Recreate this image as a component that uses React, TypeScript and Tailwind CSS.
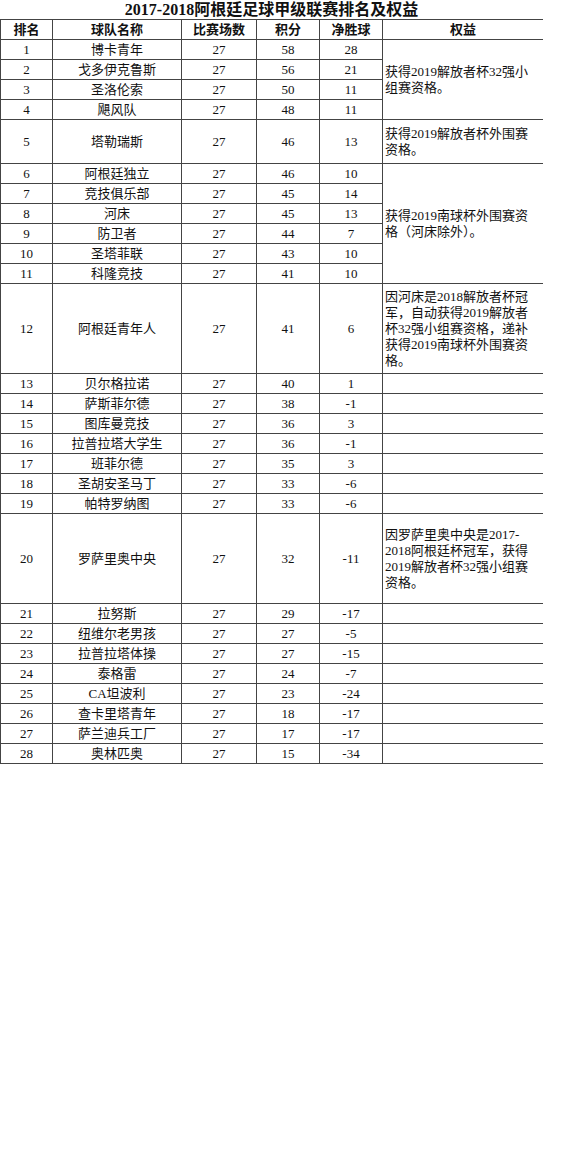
import React from 'react';

interface TeamRow {
  rank: number;
  name: string;
  played: number;
  points: number;
  diff: number;
}

const teams: TeamRow[] = [
  { rank: 1, name: '博卡青年', played: 27, points: 58, diff: 28 },
  { rank: 2, name: '戈多伊克鲁斯', played: 27, points: 56, diff: 21 },
  { rank: 3, name: '圣洛伦索', played: 27, points: 50, diff: 11 },
  { rank: 4, name: '飓风队', played: 27, points: 48, diff: 11 },
  { rank: 5, name: '塔勒瑞斯', played: 27, points: 46, diff: 13 },
  { rank: 6, name: '阿根廷独立', played: 27, points: 46, diff: 10 },
  { rank: 7, name: '竞技俱乐部', played: 27, points: 45, diff: 14 },
  { rank: 8, name: '河床', played: 27, points: 45, diff: 13 },
  { rank: 9, name: '防卫者', played: 27, points: 44, diff: 7 },
  { rank: 10, name: '圣塔菲联', played: 27, points: 43, diff: 10 },
  { rank: 11, name: '科隆竞技', played: 27, points: 41, diff: 10 },
  { rank: 12, name: '阿根廷青年人', played: 27, points: 41, diff: 6 },
  { rank: 13, name: '贝尔格拉诺', played: 27, points: 40, diff: 1 },
  { rank: 14, name: '萨斯菲尔德', played: 27, points: 38, diff: -1 },
  { rank: 15, name: '图库曼竞技', played: 27, points: 36, diff: 3 },
  { rank: 16, name: '拉普拉塔大学生', played: 27, points: 36, diff: -1 },
  { rank: 17, name: '班菲尔德', played: 27, points: 35, diff: 3 },
  { rank: 18, name: '圣胡安圣马丁', played: 27, points: 33, diff: -6 },
  { rank: 19, name: '帕特罗纳图', played: 27, points: 33, diff: -6 },
  { rank: 20, name: '罗萨里奥中央', played: 27, points: 32, diff: -11 },
  { rank: 21, name: '拉努斯', played: 27, points: 29, diff: -17 },
  { rank: 22, name: '纽维尔老男孩', played: 27, points: 27, diff: -5 },
  { rank: 23, name: '拉普拉塔体操', played: 27, points: 27, diff: -15 },
  { rank: 24, name: '泰格雷', played: 27, points: 24, diff: -7 },
  { rank: 25, name: 'CA坦波利', played: 27, points: 23, diff: -24 },
  { rank: 26, name: '查卡里塔青年', played: 27, points: 18, diff: -17 },
  { rank: 27, name: '萨兰迪兵工厂', played: 27, points: 17, diff: -17 },
  { rank: 28, name: '奥林匹奥', played: 27, points: 15, diff: -34 },
];

// rights column: rank where the block starts -> rows spanned + text lines
const rights: Record<number, { span: string; lines: string[] }> = {
  1: { span: 'row-span-4', lines: ['获得2019解放者杯32强小', '组赛资格。'] },
  5: { span: 'row-span-1', lines: ['获得2019解放者杯外围赛', '资格。'] },
  6: { span: 'row-span-6', lines: ['获得2019南球杯外围赛资', '格（河床除外）。'] },
  12: {
    span: 'row-span-1',
    lines: ['因河床是2018解放者杯冠', '军，自动获得2019解放者', '杯32强小组赛资格，递补', '获得2019南球杯外围赛资', '格。'],
  },
  20: {
    span: 'row-span-1',
    lines: ['因罗萨里奥中央是2017-', '2018阿根廷杯冠军，获得', '2019解放者杯32强小组赛', '资格。'],
  },
};

// ranks covered by a spanning block above them
const covered = new Set([2, 3, 4, 7, 8, 9, 10, 11]);

const cell = 'flex items-center justify-center border-b border-r border-[#444]';

export default function App() {
  return (
    <div
      className="w-[543px] bg-white text-[#111]"
      style={{ fontFamily: '"Liberation Serif", "Noto Sans CJK SC", serif' }}
    >
      <h1 className="h-[19px] text-center text-[16px] font-bold leading-[19px]">
        2017-2018阿根廷足球甲级联赛排名及权益
      </h1>
      <div className="grid grid-cols-[53px_129px_75px_63px_63px_160px] grid-rows-[21px_repeat(4,20px)_44px_repeat(6,20px)_90px_repeat(7,20px)_90px_repeat(8,20px)] text-[13px] leading-[16px]">
        <div className={`${cell} border-l border-t font-bold`}>排名</div>
        <div className={`${cell} border-t font-bold`}>球队名称</div>
        <div className={`${cell} border-t font-bold`}>比赛场数</div>
        <div className={`${cell} border-t font-bold`}>积分</div>
        <div className={`${cell} border-t font-bold`}>净胜球</div>
        <div className="flex items-center justify-center border-b border-t border-[#444] font-bold">权益</div>

        {teams.map(t => (
          <React.Fragment key={t.rank}>
            <div className={`${cell} border-l`}>{t.rank}</div>
            <div className={cell}>{t.name}</div>
            <div className={cell}>{t.played}</div>
            <div className={cell}>{t.points}</div>
            <div className={cell}>{t.diff}</div>
            {rights[t.rank] ? (
              <div className={`${rights[t.rank].span} flex flex-col justify-center border-b border-[#444] pl-[2px]`}>
                {rights[t.rank].lines.map(line => (
                  <span key={line} className="whitespace-nowrap">{line}</span>
                ))}
              </div>
            ) : covered.has(t.rank) ? null : (
              <div className="border-b border-[#444]" />
            )}
          </React.Fragment>
        ))}
      </div>
    </div>
  );
}
